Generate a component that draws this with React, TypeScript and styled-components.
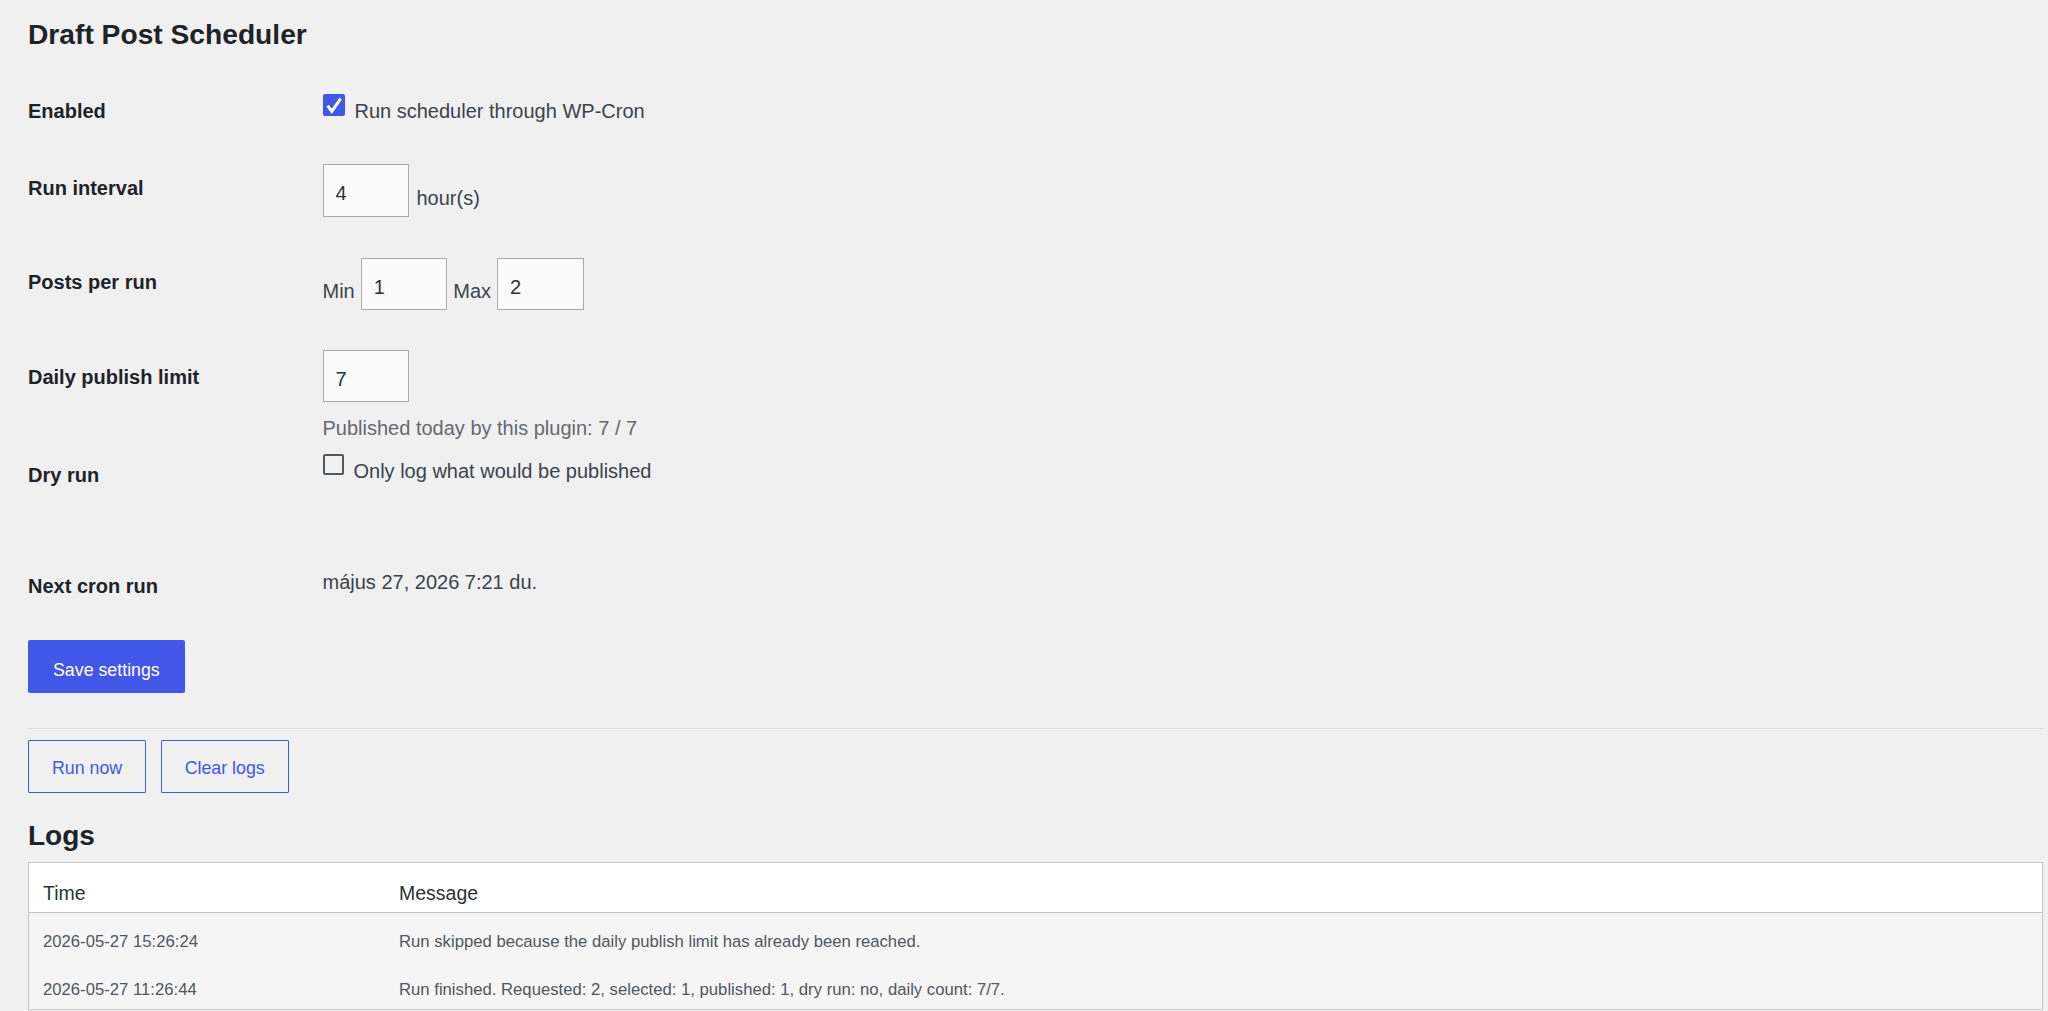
import React from 'react';
import styled, { createGlobalStyle } from 'styled-components';

const GlobalStyle = createGlobalStyle`
    html, body {
        margin: 0;
        padding: 0;
        background: #f0f0f1;
    }
    body {
        font-family: "Liberation Sans", Arial, sans-serif;
        color: #3c434a;
        overflow: hidden;
    }
`

const Wrap = styled.div`
    padding: 16px 5px 0 28px;
`
const Title = styled.h1`
    margin: 0;
    font-size: 28.2px;
    font-weight: 700;
    line-height: 36px;
    color: #1d2327;
`
const Form = styled.form`
    margin-top: 19.6px;
`
const FormRow = styled.div<{ $h: number }>`
    display: grid;
    grid-template-columns: 294.5px 1fr;
    height: ${p => p.$h}px;
`
const Label = styled.div`
    padding-top: 26px;
    font-size: 20px;
    font-weight: 700;
    line-height: 26px;
    color: #1d2327;
`
const Field = styled.div<{ $pt: number }>`
    padding-top: ${p => p.$pt}px;
    font-size: 20px;
    line-height: 26px;
    color: #3c434a;
`
const Option = styled.label`
    display: flex;
    align-items: flex-start;
    gap: 10px;
`
const Box = styled.span<{ $checked?: boolean }>`
    display: inline-flex;
    align-items: center;
    justify-content: center;
    box-sizing: border-box;
    width: ${p => (p.$checked ? 22 : 21)}px;
    height: ${p => (p.$checked ? 22 : 21)}px;
    border-radius: 2px;
    background: ${p => (p.$checked ? '#4257e7' : 'transparent')};
    border: ${p => (p.$checked ? 'none' : '2px solid #50575e')};
    flex-shrink: 0;
`
const OptionText = styled.span`
    padding-top: 4px;
`
const InputLine = styled.div`
    display: flex;
    align-items: flex-end;
    gap: 6px;
`
const InlineText = styled.span<{ $gap?: number }>`
    margin-bottom: 6px;
    margin-left: ${p => p.$gap ?? 0}px;
`
const NumberInput = styled.input`
    box-sizing: border-box;
    width: 86.5px;
    height: 52.5px;
    margin: 0;
    padding: 6px 12px 0;
    border: 1px solid #a7aaad;
    border-radius: 0;
    background: #fafafa;
    font-family: inherit;
    font-size: 20px;
    color: #2c3338;
    outline: none;
`
const Description = styled.p`
    margin: 12.7px 0 0;
    color: #646970;
`
const PrimaryButton = styled.button`
    box-sizing: border-box;
    height: 53px;
    padding: 8px 25px 0;
    border: none;
    border-radius: 2px;
    background: #4257e7;
    color: #ffffff;
    font-family: inherit;
    font-size: 17.8px;
    cursor: pointer;
`
const Divider = styled.hr`
    margin: 35px 0 0;
    border: 0;
    border-top: 1px solid #dcdcde;
`
const Actions = styled.div`
    display: flex;
    gap: 14.5px;
    margin-top: 11px;
`
const SecondaryButton = styled.button`
    box-sizing: border-box;
    height: 53px;
    padding: 5px 23px 0;
    border: 1px solid #4257e7;
    border-radius: 1px;
    background: transparent;
    color: #4257e7;
    font-family: inherit;
    font-size: 17.8px;
    cursor: pointer;
`
const SectionTitle = styled.h2`
    margin: 25px 0 0;
    font-size: 28px;
    font-weight: 700;
    line-height: 36px;
    color: #1d2327;
`
const LogTable = styled.table`
    width: 100%;
    margin-top: 8px;
    border: 1px solid #c3c4c7;
    border-spacing: 0;
    background: #f5f5f5;
`
const HeadCell = styled.th<{ $w?: number }>`
    width: ${p => (p.$w ? `${p.$w}px` : 'auto')};
    padding: 18px 14px 7px;
    background: #ffffff;
    border-bottom: 1px solid #c3c4c7;
    text-align: left;
    font-size: 19.5px;
    font-weight: 400;
    line-height: 24px;
    color: #2c3338;
`
const Cell = styled.td`
    padding: 17px 14px 7px;
    font-size: 16.7px;
    line-height: 24px;
    color: #50575e;
`

const Check = () => (
    <svg width="22" height="22" viewBox="0 0 22 22">
        <path d="M4.6 11.6 L8.8 17.4 L17.6 4.6" fill="none" stroke="#ffffff" strokeWidth="3" strokeLinejoin="miter" />
    </svg>
)

const logs = [
    { time: '2026-05-27 15:26:24', message: 'Run skipped because the daily publish limit has already been reached.' },
    { time: '2026-05-27 11:26:44', message: 'Run finished. Requested: 2, selected: 1, published: 1, dry run: no, daily count: 7/7.' },
]

const App = () => {
    return (
        <>
            <GlobalStyle />
            <Wrap>
                <Title>Draft Post Scheduler</Title>
                <Form onSubmit={e => e.preventDefault()}>
                    <FormRow $h={77}>
                        <Label>Enabled</Label>
                        <Field $pt={22}>
                            <Option>
                                <Box $checked><Check /></Box>
                                <OptionText>Run scheduler through WP-Cron</OptionText>
                            </Option>
                        </Field>
                    </FormRow>
                    <FormRow $h={94}>
                        <Label>Run interval</Label>
                        <Field $pt={15.7}>
                            <InputLine>
                                <NumberInput type="text" defaultValue="4" />
                                <InlineText $gap={1.5}>hour(s)</InlineText>
                            </InputLine>
                        </Field>
                    </FormRow>
                    <FormRow $h={95.4}>
                        <Label>Posts per run</Label>
                        <Field $pt={15.4}>
                            <InputLine>
                                <InlineText>Min</InlineText>
                                <NumberInput type="text" defaultValue="1" />
                                <InlineText>Max</InlineText>
                                <NumberInput type="text" defaultValue="2" />
                            </InputLine>
                        </Field>
                    </FormRow>
                    <FormRow $h={97.6}>
                        <Label>Daily publish limit</Label>
                        <Field $pt={12}>
                            <InputLine>
                                <NumberInput type="text" defaultValue="7" />
                            </InputLine>
                            <Description>Published today by this plugin: 7 / 7</Description>
                        </Field>
                    </FormRow>
                    <FormRow $h={111}>
                        <Label>Dry run</Label>
                        <Field $pt={18.4}>
                            <Option>
                                <Box />
                                <OptionText>Only log what would be published</OptionText>
                            </Option>
                        </Field>
                    </FormRow>
                    <FormRow $h={93.4}>
                        <Label>Next cron run</Label>
                        <Field $pt={22}>május 27, 2026 7:21 du.</Field>
                    </FormRow>
                    <PrimaryButton type="submit">Save settings</PrimaryButton>
                </Form>
                <Divider />
                <Actions>
                    <SecondaryButton>Run now</SecondaryButton>
                    <SecondaryButton>Clear logs</SecondaryButton>
                </Actions>
                <SectionTitle>Logs</SectionTitle>
                <LogTable>
                    <thead>
                        <tr>
                            <HeadCell $w={328}>Time</HeadCell>
                            <HeadCell>Message</HeadCell>
                        </tr>
                    </thead>
                    <tbody>
                        {logs.map((log, index) => (
                            <tr key={index}>
                                <Cell>{log.time}</Cell>
                                <Cell>{log.message}</Cell>
                            </tr>
                        ))}
                    </tbody>
                </LogTable>
            </Wrap>
        </>
    );
}
export default App;
